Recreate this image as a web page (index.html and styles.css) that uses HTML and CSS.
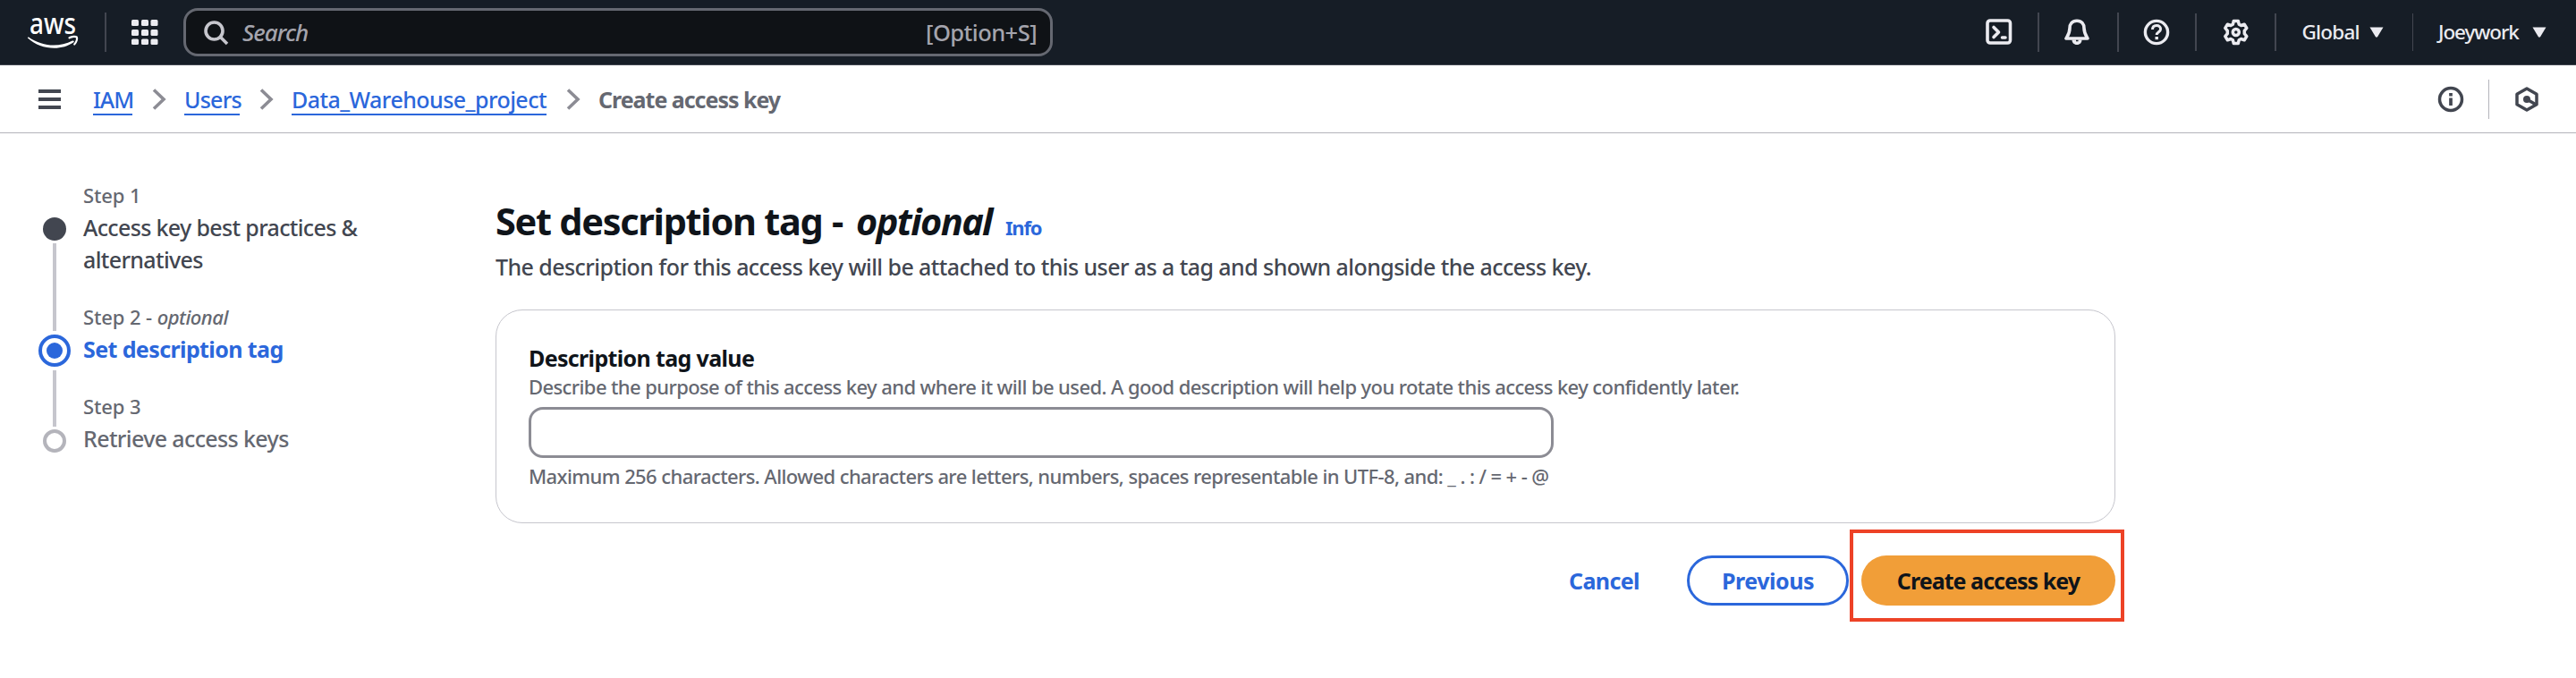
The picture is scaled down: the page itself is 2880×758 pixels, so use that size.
FILE: index.html
```html
<!DOCTYPE html>
<html lang="en">
<head>
<meta charset="utf-8">
<title>Create access key | IAM</title>
<link rel="stylesheet" href="styles.css">
</head>
<body>
<header class="topnav">
  <svg class="logo" width="58" height="44" viewBox="0 0 58 44">
    <text x="2" y="24.500" class="logo-text" textLength="52" lengthAdjust="spacingAndGlyphs">aws</text>
    <path d="M1 28.500c16 11 34 11.500 49 4 1.500-.5 2.500.8 1.300 1.800C37 44.500 14 42.500 .300 29.800c-.8-.8-.2-1.700.7-1.300z" fill="#fff"/>
    <path d="M46.500 29.300c3-1.600 7-1.700 8.300-.8.900 1.600-.3 5.800-2.600 8" fill="none" stroke="#fff" stroke-width="2.200" stroke-linecap="round" stroke-linejoin="round"/>
  </svg>
  <span class="rule rule-tall rule-logo"></span>
  <svg class="apps" width="30" height="28" viewBox="0 0 30 28" fill="#ebebf0">
    <rect x="0" y="0" width="8" height="7" rx="1.500"/><rect x="11" y="0" width="8" height="7" rx="1.500"/><rect x="21.500" y="0" width="8" height="7" rx="1.500"/>
    <rect x="0" y="11" width="8" height="7" rx="1.500"/><rect x="11" y="11" width="8" height="7" rx="1.500"/><rect x="21.500" y="11" width="8" height="7" rx="1.500"/>
    <rect x="0" y="21.500" width="8" height="6.500" rx="1.500"/><rect x="11" y="21.500" width="8" height="6.500" rx="1.500"/><rect x="21.500" y="21.500" width="8" height="6.500" rx="1.500"/>
  </svg>
  <div class="search">
    <svg width="28" height="28" viewBox="0 0 28 28" fill="none" stroke="#c6c6cd" stroke-width="3.600"><circle cx="11.500" cy="11.500" r="9.500"/><path d="M18 18l8 8"/></svg>
    <span class="search-hint">Search</span>
    <span class="search-key">[Option+S]</span>
  </div>
  <div class="tools">
    <svg width="30" height="30" viewBox="0 0 30 30" fill="none" stroke="#ebebf0" stroke-width="3.600" stroke-linecap="round" stroke-linejoin="round"><rect x="2" y="2" width="25.500" height="25" rx="3"/><path d="M9 9.500l5.500 5.500L9 20.500M18.500 21h3.500"/></svg>
    <span class="rule rule-tall r1"></span>
    <svg class="bell" width="28" height="30" viewBox="0 0 28 30"><path d="M14 2.200c-5.500 0-8 3.800-8 8.300 0 5.500-1.500 7.500-4 11.500h24c-2.500-4-4-6-4-11.500 0-4.500-2.500-8.300-8-8.300z" fill="none" stroke="#ebebf0" stroke-width="3.600" stroke-linejoin="round"/><path d="M8.500 23.500h11c0 3-2 5.500-5.500 5.500s-5.500-2.500-5.500-5.500z" fill="#ebebf0"/><path d="M13 24.500h2.500" stroke="#161d26" stroke-width="1.500"/></svg>
    <span class="rule rule-tall r2"></span>
    <svg class="help" width="30" height="30" viewBox="0 0 30 30" fill="none" stroke="#ebebf0"><circle cx="15" cy="15" r="12.600" stroke-width="3.400"/><path d="M10.500 12c0-3 2-4.500 4.600-4.500s4.500 1.600 4.500 4c0 3.200-4.400 3.300-4.400 6.500" stroke-width="3"/><path d="M15.200 20v3.200" stroke-width="3.400"/></svg>
    <span class="rule r3"></span>
    <svg class="gear" width="30" height="30" viewBox="0 0 30 30" fill="none" stroke="#ebebf0" stroke-width="3.500" stroke-linejoin="round"><path d="M12.300 2.500h5l.9 3.700 2.400 1.300 3.600-1.300 2.600 4.200-2.500 2.900v3.400l2.500 2.900-2.600 4.200-3.600-1.300-2.400 1.300-.9 3.700h-5l-.9-3.700L9 22.500l-3.600 1.300-2.600-4.200 2.500-2.900v-3.400l-2.500-2.900 2.600-4.200L9 7.500l2.400-1.300z"/><circle cx="14.800" cy="15" r="3.500"/></svg>
    <span class="rule rule-thin r4"></span>
    <span class="menu menu-global">Global</span>
    <svg width="16" height="12" viewBox="0 0 16 12"><path d="M.5.500h15l-6.300 10.500q-1.200 1.500-2.400 0z" fill="#ebebf0"/></svg>
    <span class="rule rule-thin r5"></span>
    <span class="menu menu-user">Joeywork</span>
    <svg width="16" height="12" viewBox="0 0 16 12"><path d="M.5.500h15l-6.300 10.500q-1.200 1.500-2.400 0z" fill="#ebebf0"/></svg>
  </div>
</header>

<nav class="crumbbar">
  <span class="burger"><i></i><i></i><i></i></span>
  <a class="crumb c-iam">IAM</a>
  <svg class="chev" width="16" height="24" viewBox="0 0 16 24"><path d="M2 1.500L13 12 2 22.500"/></svg>
  <a class="crumb c-users">Users</a>
  <svg class="chev" width="16" height="24" viewBox="0 0 16 24"><path d="M2 1.500L13 12 2 22.500"/></svg>
  <a class="crumb c-proj">Data_Warehouse_project</a>
  <svg class="chev" width="16" height="24" viewBox="0 0 16 24"><path d="M2 1.500L13 12 2 22.500"/></svg>
  <span class="crumb-current">Create access key</span>
  <div class="crumb-tools">
    <svg width="30" height="30" viewBox="0 0 30 30" fill="none" stroke="#424650"><circle cx="15" cy="15" r="12.500" stroke-width="3.500"/><path d="M15 13.500v8.500M15 8v3.500" stroke-width="3.700"/></svg>
    <span class="crumb-rule"></span>
    <svg width="28" height="30" viewBox="0 0 28 30"><path d="M14 3l11 6.200v11.600L14 27 3 20.800V9.200z" fill="none" stroke="#424650" stroke-width="3.500" stroke-linejoin="round"/><circle cx="14" cy="15" r="4" fill="#424650"/><path d="M14 15l9.500 5.500" stroke="#424650" stroke-width="3.500"/></svg>
  </div>
</nav>

<main class="page">
  <aside class="steps">
    <div class="rail">
      <span class="dot dot-done"></span><span class="line line-a"></span>
      <span class="dot-active"><i></i></span><span class="line line-b"></span>
      <span class="dot dot-todo"></span>
    </div>
    <ol class="step-list">
      <li><div class="step-no">Step 1</div><div class="step-title t1">Access key best practices &amp;<br>alternatives</div></li>
      <li><div class="step-no">Step 2 - <em>optional</em></div><div class="step-title t2">Set description tag</div></li>
      <li><div class="step-no">Step 3</div><div class="step-title t3">Retrieve access keys</div></li>
    </ol>
  </aside>
  <section class="content">
    <h1><span class="h-main">Set description tag</span><span class="h-dash">-</span><em>optional</em><a class="info">Info</a></h1>
    <p class="lead">The description for this access key will be attached to this user as a tag and shown alongside the access key.</p>
    <div class="card">
      <label class="label" for="tag">Description tag value</label>
      <p class="hint">Describe the purpose of this access key and where it will be used. A good description will help you rotate this access key confidently later.</p>
      <input class="field" id="tag" type="text">
      <p class="constraint">Maximum 256 characters. Allowed characters are letters, numbers, spaces representable in UTF-8, and: _ . : / = + - @</p>
    </div>
    <div class="actions">
      <button class="btn cancel">Cancel</button>
      <button class="btn previous">Previous</button>
      <div class="create-wrap"><button class="btn create">Create access key</button><span class="highlight"></span></div>
    </div>
  </section>
</main>
</body>
</html>
```
FILE: styles.css
```css
* { box-sizing: border-box; }
body { margin: 0; width: 2880px; height: 758px; overflow: hidden; background: #fff; font-family: "Noto Sans", "Open Sans", sans-serif; font-weight: 500; color: #0f141a; }
p, h1, ol { margin: 0; padding: 0; }
svg { display: block; flex: none; }
span, a { white-space: nowrap; }

.topnav { height: 73px; display: flex; align-items: center; background: #161d26; border-bottom: 1px solid #424650; padding-left: 31px; }
.logo { margin-top: -2px; overflow: visible; }
.logo-text { font-family: "Noto Sans", sans-serif; font-size: 33px; font-weight: 500; fill: #fff; }
.rule { flex: none; width: 2px; height: 42px; background: #424650; }
.rule-tall { height: 44px; }
.rule-thin { width: 1.5px; }
.rule-logo { margin-left: 28px; }
.apps { margin-left: 28px; }
.search { margin-left: 28px; width: 972px; height: 54px; border: 3px solid #656871; border-radius: 16px; background: #0f1216; display: flex; align-items: center; padding: 0 15px 0 20px; }
.search svg { margin-top: 2px; }
.search-hint { margin-left: 15px; font-size: 26px; font-style: italic; letter-spacing: -0.95px; line-height: 36px; color: #a4a4ad; }
.search-key { margin-left: auto; font-size: 25.5px; letter-spacing: -0.55px; line-height: 36px; color: #a4a4ad; }

.tools { margin-left: auto; margin-right: 33px; display: flex; align-items: center; }
.r1 { margin: 0 28px; }
.r2 { margin: 0 27px 0 31px; }
.r3 { margin: 0 29px 0 28px; }
.r4 { margin: 0 29px 0 28px; }
.menu { font-size: 22.5px; line-height: 36px; color: #ebebf0; }
.menu-global { width: 75px; letter-spacing: -0.8px; }
.r5 { margin: 0 28px 0 32px; }
.menu-user { width: 105px; letter-spacing: -1.1px; }

.crumbbar { height: 76px; display: flex; align-items: center; border-bottom: 1px solid #b4b4bb; padding-left: 43px; }
.burger { width: 25px; display: flex; flex-direction: column; gap: 5px; margin-right: 36px; }
.burger i { height: 4px; background: #424650; }
.crumb { height: 35px; margin-top: 2px; font-size: 25px; line-height: 34px; color: #2b67db; border-bottom: 2px solid #2b67db; }
.c-iam { width: 44px; letter-spacing: -1px; }
.c-users { width: 62px; letter-spacing: -0.75px; }
.c-proj { width: 285px; letter-spacing: -0.54px; }
.chev { margin: 0 20px 0 22px; fill: none; stroke: #8c8c94; stroke-width: 3.6; }
.crumb-current { line-height: 34px; font-size: 25px; font-weight: 700; letter-spacing: -1.02px; color: #656871; }
.crumb-tools { margin-left: auto; margin-right: 41px; display: flex; align-items: center; }
.crumb-rule { width: 1px; height: 44px; background: #b4b4bb; margin: 0 28px 0 27px; }

.page { display: flex; padding: 51px 0 0 43px; }
.steps { width: 511px; display: flex; gap: 14px; }
.rail { width: 36px; padding-top: 43px; display: flex; flex-direction: column; align-items: center; }
.dot { width: 26px; height: 26px; border-radius: 50%; }
.dot-done { background: #424650; }
.dot-todo { border: 4px solid #b4b4bb; }
.dot-active { width: 36px; height: 36px; border: 4px solid #2b67db; border-radius: 50%; display: grid; place-items: center; }
.dot-active i { width: 18px; height: 18px; border-radius: 50%; background: #2b67db; }
.line { width: 4px; background: #c6c6cd; }
.line-a { height: 98px; margin: 3px 0 4px; }
.line-b { height: 63px; margin: 4px 0 3px; }
.step-list { list-style: none; padding-top: 1px; display: flex; flex-direction: column; gap: 29px; }
.step-no { font-size: 22px; line-height: 35px; letter-spacing: -0.1px; color: #656871; }
.step-no em { letter-spacing: -0.5px; }
.step-title { font-size: 25px; line-height: 36px; white-space: nowrap; }
.t1 { color: #424650; letter-spacing: -0.65px; }
.t2 { color: #2b67db; font-weight: 700; letter-spacing: -0.6px; }
.t3 { color: #656871; letter-spacing: -0.62px; }

.content { width: 1811px; padding-top: 17px; }
h1 { height: 60px; display: flex; align-items: baseline; font-size: 41.5px; line-height: 60px; font-weight: 700; }
.h-main { width: 376px; letter-spacing: -1.3px; }
.h-dash { width: 27px; }
h1 em { width: 167px; letter-spacing: -1.6px; }
.info { font-size: 22px; line-height: 30px; font-weight: 700; letter-spacing: -1.2px; color: #2b67db; }
.lead { font-size: 25px; line-height: 40px; letter-spacing: -0.57px; color: #424650; margin-top: 1px; white-space: nowrap; }
.card { margin-top: 28px; height: 239px; border: 1px solid #c6c6cd; border-radius: 30px; padding: 35px 36px; }
.label { display: block; font-size: 25px; font-weight: 700; line-height: 36px; letter-spacing: -0.65px; }
.hint { font-size: 22px; line-height: 29px; letter-spacing: -0.6px; color: #656871; white-space: nowrap; }
.field { display: block; width: 1146px; height: 57px; margin-top: 8px; border: 3px solid #8c8c94; border-radius: 16px; background: #fff; }
.constraint { margin-top: 5px; font-size: 22px; line-height: 31px; letter-spacing: -0.59px; color: #656871; white-space: nowrap; }
.actions { margin-top: 36px; display: flex; justify-content: flex-end; }
.btn { height: 56px; padding: 0; border: 0; border-radius: 28px; background: none; font: 700 25px/36px "Noto Sans", sans-serif; color: #2b67db; white-space: nowrap; }
.cancel { width: 157px; letter-spacing: -0.62px; }
.previous { width: 181px; margin: 0 14px; border: 3px solid #2b67db; letter-spacing: -0.46px; }
.create-wrap { position: relative; }
.create { width: 284px; background: #f19e38; color: #0f141a; letter-spacing: -0.95px; }
.highlight { position: absolute; left: -13px; top: -29px; width: 307px; height: 103px; border: 4px solid #ed4226; }
```
